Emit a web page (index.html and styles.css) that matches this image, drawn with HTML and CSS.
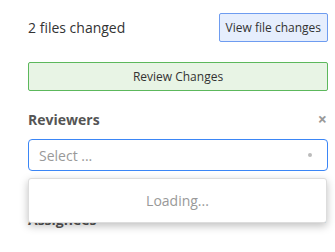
FILE: index.html
```html
<!doctype html>
<html>
<head>
<meta charset="utf-8">
<title>Merge request sidebar</title>
<link rel="stylesheet" href="styles.css">
</head>
<body>

<div class="sidebar">

    <div class="changes">
        <span class="count">2 files changed</span>
        <button class="btn btn-view">View file changes</button>
    </div>

    <button class="btn btn-review">Review Changes</button>

    <div class="block">
        <div class="block-head">
            <span class="title">Reviewers</span>
            <span class="close">&times;</span>
        </div>
        <div class="select">
            <span>Select ...</span>
            <span class="dot"></span>
        </div>
        <div class="menu">Loading...</div>
    </div>

    <div class="block block-under">
        <div class="block-head">
            <span class="title">Assignees</span>
            <span class="close">&times;</span>
        </div>
    </div>

</div>

</body>
</html>
```

FILE: styles.css
```css
body { margin: 0; padding: 0; background: #fff; }
* { font-family: 'Open Sans', 'Noto Sans', Arial, sans-serif; box-sizing: border-box; }

.sidebar { width: 300px; margin-left: 28px; padding-top: 1px; }

.changes { display: flex; justify-content: space-between; align-items: center; padding-top: 12px; height: 41px; }
.count { font-size: 14px; color: #333; }

.btn { font-size: 12px; color: #333; border-radius: 2px; cursor: pointer; }
.btn-view { height: 29px; padding: 0 6px; background: #e6eefd; border: 1px solid #6e9cf0; }
.btn-review { display: block; width: 300px; height: 29px; margin-top: 20px; background: #e8f4e5; border: 1px solid #5cb85c; }

.block { position: relative; padding-top: 1px; }
.block-head { display: flex; justify-content: space-between; align-items: center; margin-top: 16px; height: 22px; }
.title { font-size: 14px; font-weight: 700; color: #555; }
.close { font-size: 16px; font-weight: 700; color: #999; margin-right: 1px; }

.select { display: flex; justify-content: space-between; align-items: center; margin-top: 9px; height: 32px; padding: 0 10px; border: 1px solid #3b86f6; border-radius: 4px; font-size: 14px; color: #999; }
.dot { width: 4px; height: 4px; border-radius: 50%; background: #bbb; margin-right: 5px; }

.menu { position: absolute; left: 0; right: 1px; top: 87px; z-index: 2; height: 45px; display: flex; align-items: center; justify-content: center; background: #fff; border: 1px solid #ddd; border-radius: 3px; box-shadow: 0 3px 8px rgba(0,0,0,0.25); font-size: 14px; color: #999; }

.block-under { padding-bottom: 22px; border-bottom: 1px solid #ddd; }
.block-under .block-head { margin-top: 36px; }
```
